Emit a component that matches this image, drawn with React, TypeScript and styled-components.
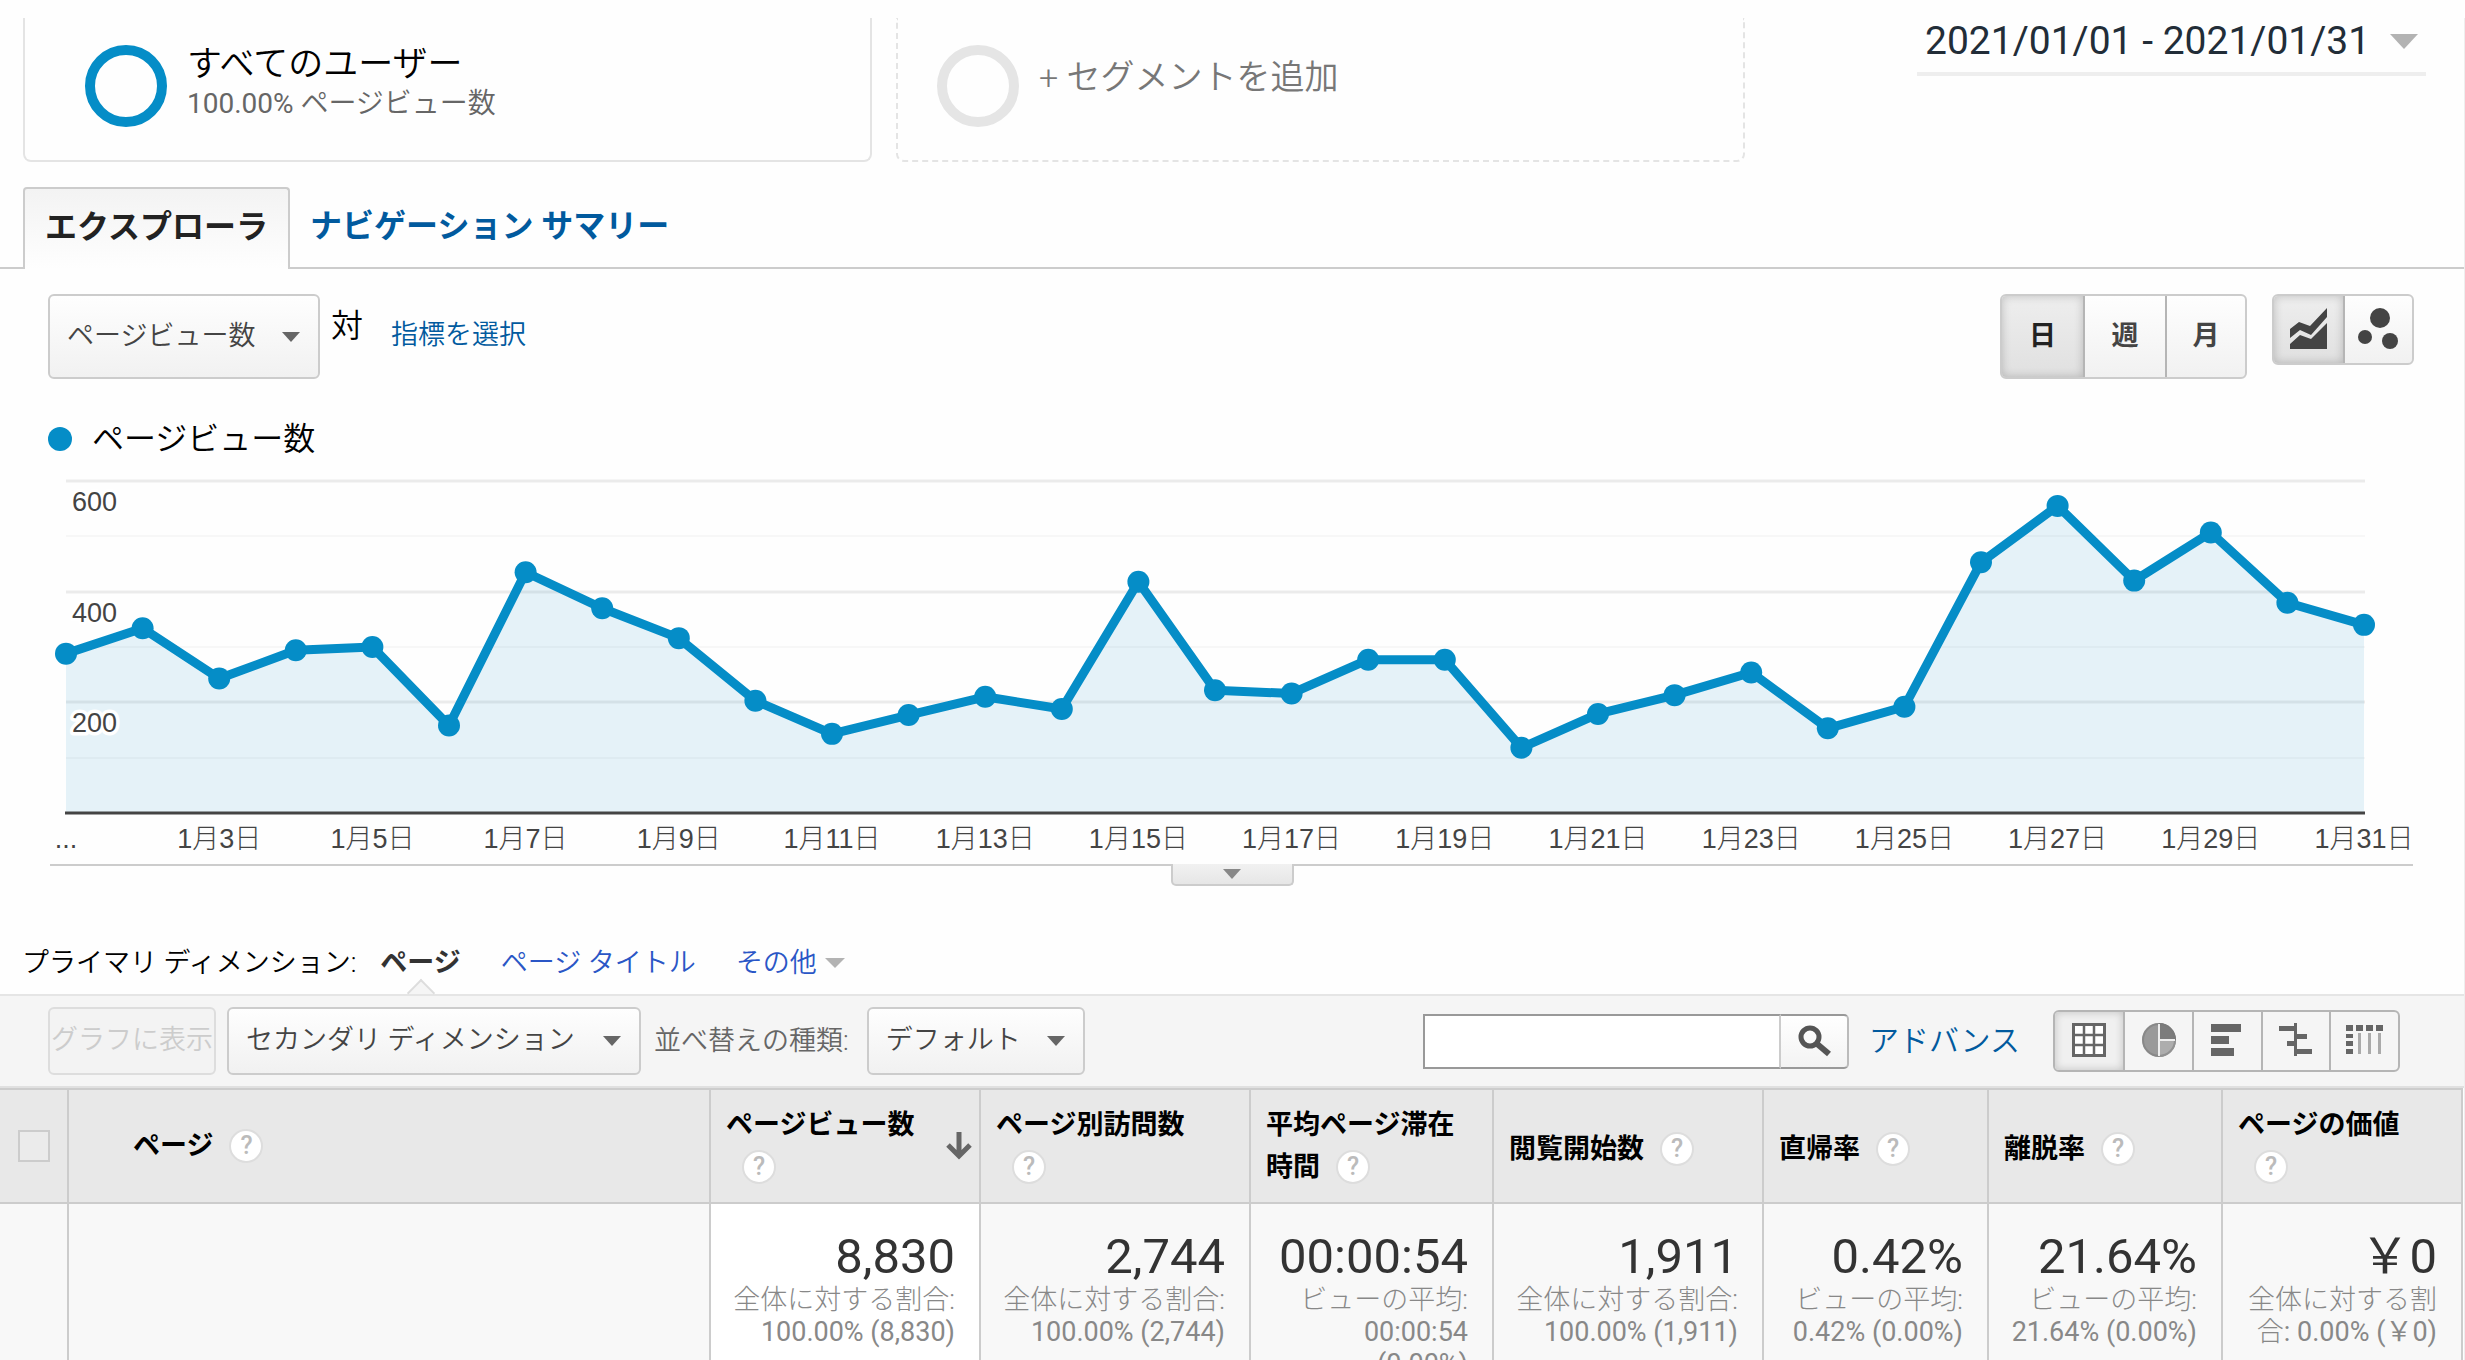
import React, { useLayoutEffect, useRef, useState } from "react";
import styled, { createGlobalStyle, css } from "styled-components";

const jp = `"Noto Sans CJK JP", sans-serif`;

const GlobalStyle = createGlobalStyle`
  *, *::before, *::after { box-sizing: border-box; }
  body {
    margin: 0;
    background: #fefefe;
    color: #000;
    font: 350 27px/40px Roboto, ${jp};
  }
  button, input, select { font: inherit; color: inherit; margin: 0; }
  a { color: #015a9e; text-decoration: none; }
`;

const Page = styled.main`
  height: 100vh;
  overflow: hidden;
  padding-top: 18px;
`;

const Report = styled.div`
  border-right: 1px solid #eee;
  min-height: 100%;
`;

/* ---------- segments ---------- */

const SegmentBar = styled.header`
  display: flex;
  align-items: flex-start;
  gap: 24px;
  padding: 0 38px 0 23px;
  height: 169px;
`;

const Segment = styled.button<{ $empty?: boolean }>`
  display: flex;
  flex: 0 1 849px;
  height: 144px;
  align-items: flex-start;
  gap: 20px;
  padding: ${(p) => (p.$empty ? "27px 0 0 39px" : "27px 0 0 60px")};
  background: none;
  border: 2px ${(p) => (p.$empty ? "dashed" : "solid")} #e4e4e4;
  border-top: 0;
  border-radius: 0 0 8px 8px;
  text-align: left;
`;

const Ring = styled.span<{ $color: string }>`
  flex: none;
  width: 82px;
  height: 82px;
  border: 10px solid ${(p) => p.$color};
  border-radius: 50%;
`;

const SegmentText = styled.span<{ $muted?: boolean }>`
  display: flex;
  flex-direction: column;
  font-size: 35px;
  ${(p) => p.$muted && css`color: #777; padding-top: 12px; font-size: 34px;`}
  small { font-size: 28px; line-height: 38px; color: #666; }
`;

const Digits = styled.span`
  font-weight: 400;
`;

const DateRange = styled.button`
  display: flex;
  align-items: center;
  justify-content: space-between;
  width: 509px;
  height: 58px;
  margin-left: auto;
  padding: 0 8px 8px;
  background: none;
  border: 0;
  border-bottom: 4px solid #eee;
  color: #222d38;
  font-size: 39px;
  font-weight: 400;
  white-space: nowrap;
`;

const Caret = styled.span<{ $w: number; $h: number; $color: string }>`
  flex: none;
  border: solid transparent;
  border-width: ${(p) => p.$h}px ${(p) => p.$w}px 0;
  border-top-color: ${(p) => p.$color};
`;

/* ---------- tabs ---------- */

const Tabs = styled.nav`
  display: flex;
  height: 82px;
  padding-left: 23px;
  border-bottom: 2px solid #ccc;
  font-size: 32px;
  font-weight: 700;
`;

const Tab = styled.a<{ $active?: boolean }>`
  display: flex;
  align-items: center;
  height: 82px;
  padding: 0 20px 4px;
  ${(p) =>
    p.$active &&
    css`
      color: #222;
      background: linear-gradient(#f3f3f3, #fefefe);
      border: 2px solid #ccc;
      border-bottom: 0;
      border-radius: 4px 4px 0 0;
    `}
`;

/* ---------- controls ---------- */

const Controls = styled.div`
  display: flex;
  align-items: flex-start;
  padding: 25px 50px 0 48px;
`;

const raised = css`
  background: linear-gradient(#fefefe, #f1f1f1);
  border: 2px solid #ccc;
  border-radius: 6px;
  color: #444;
`;

const DropBox = styled.span`
  position: relative;
  display: flex;
  flex: none;
`;

const DropSelect = styled.select<{ $h: number }>`
  ${raised}
  appearance: none;
  height: ${(p) => p.$h}px;
  padding: 0 62px 2px 17px;
`;

const DropCaret = styled(Caret)`
  position: absolute;
  right: 20px;
  top: 50%;
  margin-top: -5px;
  pointer-events: none;
`;

const Versus = styled.span`
  padding: 12px 28px 0 11px;
  font-size: 32px;
`;

const MetricLink = styled.a`
  padding-top: 21px;
`;

const ButtonGroup = styled.div<{ $h: number }>`
  ${raised}
  display: flex;
  height: ${(p) => p.$h}px;
  overflow: hidden;
`;

const GroupButton = styled.button<{ $w: number; $on?: boolean; $line?: string }>`
  display: flex;
  align-items: center;
  justify-content: center;
  width: ${(p) => p.$w}px;
  padding: 0 0 2px;
  border: 0;
  background: none;
  font-weight: 700;
  & + & { border-left: 2px solid ${(p) => p.$line ?? "#ccc"}; }
  ${(p) =>
    p.$on &&
    css`
      color: #222;
      background: linear-gradient(#eee, #e0e0e0);
      box-shadow: inset 0 0 10px rgba(0, 0, 0, 0.2);
    `}
`;

const RightSide = styled.div`
  display: flex;
  align-items: flex-start;
  gap: 25px;
  margin-left: auto;
`;

/* ---------- chart ---------- */

const Legend = styled.div`
  display: flex;
  align-items: center;
  gap: 20px;
  height: 40px;
  margin-top: 40px;
  padding-left: 48px;
  font-size: 32px;
  &::before {
    content: "";
    width: 24px;
    height: 24px;
    border-radius: 50%;
    background: #058dc7;
  }
`;

const ChartBox = styled.div`
  margin: 21px 51px 0 50px;
  border-bottom: 2px solid #ccc;
  svg { display: block; width: 100%; height: 384px; overflow: visible; }
  text { fill: #444; font: 300 27px "Liberation Sans", ${jp}; }
`;

const Handle = styled.button`
  display: flex;
  align-items: center;
  justify-content: center;
  width: 123px;
  height: 22px;
  margin: -2px auto 0;
  padding: 0;
  background: linear-gradient(#f1f1f1, #e6e6e6);
  border: 2px solid #ccc;
  border-top: 0;
  border-radius: 0 0 5px 5px;
`;

/* ---------- dimension picker ---------- */

const Dimensions = styled.div`
  display: flex;
  align-items: center;
  height: 70px;
  margin-top: 38px;
  padding: 8px 0 0 22px;
  a { color: #2a56c6; }
`;

const CurrentDimension = styled.strong`
  position: relative;
  margin: 0 40px 0 24px;
  color: #333;
  font-weight: 700;
  &::after {
    content: "";
    position: absolute;
    left: 50%;
    top: 40px;
    width: 20px;
    height: 20px;
    margin-left: -10px;
    background: linear-gradient(135deg, #f5f5f5 50%, transparent 50%);
    border: solid #ddd;
    border-width: 2px 0 0 2px;
    transform: rotate(45deg);
  }
`;

const MoreLink = styled.a`
  display: flex;
  align-items: center;
  gap: 8px;
  margin-left: 40px;
`;

const Toolbar = styled.div`
  display: flex;
  align-items: center;
  height: 94px;
  padding: 0 64px 0 48px;
  background: #f5f5f5;
  border-top: 2px solid #e5e5e5;
  border-bottom: 2px solid #e0e0e0;
`;

const PlotButton = styled.button`
  width: 168px;
  height: 68px;
  margin-right: 11px;
  padding: 0 0 2px;
  overflow: hidden;
  background: #f3f3f3;
  border: 2px solid #ddd;
  border-radius: 6px;
  color: #ccc;
  white-space: nowrap;
`;

const SortLabel = styled.label`
  margin: 0 18px 0 13px;
  color: #666;
  white-space: nowrap;
`;

const Search = styled.form`
  display: flex;
  height: 55px;
  margin-left: auto;
  margin-right: 20px;
  input {
    width: 358px;
    padding: 0 12px;
    background: #fff;
    border: 2px solid #999;
    border-right-color: #ccc;
    border-radius: 0;
  }
  button {
    display: grid;
    place-items: center;
    width: 68px;
    padding: 0;
    background: linear-gradient(#fff, #f3f3f3);
    border: solid #bbb;
    border-width: 2px 2px 2px 0;
    border-color: #999 #bbb #999 #bbb;
    border-radius: 0 5px 5px 0;
  }
`;

const Advanced = styled.a`
  margin-right: 33px;
  font-size: 30px;
`;

const Views = styled(ButtonGroup)`
  background: #f5f5f5;
  border-color: #b5b5b5;
`;

const ViewButton = styled(GroupButton)`
  ${(p) => p.$on && css`background: #f0f0f0; box-shadow: inset 0 0 8px rgba(0, 0, 0, 0.2);`}
`;

/* ---------- table ---------- */

const Table = styled.table`
  width: calc(100% - 1px);
  table-layout: fixed;
  border-collapse: separate;
  border-spacing: 0;
  border-top: 2px solid #ccc;
`;

const HeadCell = styled.th<{ $indent?: number; $single?: boolean }>`
  height: 114px;
  padding: ${(p) => (p.$single ? 6 : 0)}px 0 0 ${(p) => p.$indent ?? 15}px;
  background: #e8e8e8;
  border-right: 2px solid #ccc;
  border-bottom: 2px solid #ccc;
  font-weight: 700;
  line-height: 42px;
  text-align: left;
  vertical-align: middle;
`;

const HeadFlex = styled.div`
  display: flex;
  align-items: center;
  justify-content: space-between;
  padding-right: 7px;
`;

const Check = styled.input`
  display: block;
  appearance: none;
  width: 32px;
  height: 32px;
  border: 2px solid #ccc;
  background: #ebebeb;
`;

const Help = styled.button`
  display: inline-grid;
  place-items: center;
  width: 34px;
  height: 34px;
  margin: 0 0 4px 16px;
  padding: 0;
  background: #fff;
  border: 2px solid #ddd;
  border-radius: 50%;
  color: #bbb;
  font: 500 25px/30px Roboto, sans-serif;
  vertical-align: middle;
`;

const Cell = styled.td<{ $sorted?: boolean }>`
  height: 240px;
  padding: 26px 24px 0 0;
  background: ${(p) => (p.$sorted ? "#fff" : "#f8f8f8")};
  border-right: 2px solid #ccc;
  color: #888;
  line-height: 32px;
  text-align: right;
  vertical-align: top;
`;

const Total = styled.div`
  color: #333;
  font-size: 49px;
  font-weight: 400;
  line-height: 54px;
`;

const Line = styled.div<{ $caption?: boolean }>`
  font-weight: ${(p) => (p.$caption ? 300 : 400)};
  white-space: nowrap;
`;

const Light = styled.span`
  font-weight: 300;
`;

/* ---------- data ---------- */

const daily = [
  288, 334, 243, 294, 300, 158, 435, 370, 316, 203, 143, 177, 210, 188, 418, 222, 216, 277, 277, 118,
  179, 213, 254, 153, 192, 453, 555, 420, 507, 380, 340,
];

const columns = [
  { w: 270, head: ["ページビュー数", ""], total: "8,830", sub: ["全体に対する割合:", "100.00% (8,830)"] },
  { w: 270, head: ["ページ別訪問数", ""], total: "2,744", sub: ["全体に対する割合:", "100.00% (2,744)"] },
  { w: 243, head: ["平均ページ滞在", "時間"], total: "00:00:54", sub: ["ビューの平均:", "00:00:54", "(0.00%)"] },
  { w: 270, head: ["閲覧開始数"], total: "1,911", sub: ["全体に対する割合:", "100.00% (1,911)"] },
  { w: 225, head: ["直帰率"], total: "0.42%", sub: ["ビューの平均:", "0.42% (0.00%)"] },
  { w: 234, head: ["離脱率"], total: "21.64%", sub: ["ビューの平均:", "21.64% (0.00%)"] },
  { w: 240, head: ["ページの価値", ""], total: "￥0", sub: ["全体に対する割", <><Light>合</Light>: 0.00% (￥0)</>] },
];

/* ---------- drawings ---------- */

const AreaIcon = () => (
  <svg width="37" height="41" viewBox="0 0 37 41" fill="#444">
    <path d="M0 21 9 14 20 18 37 0V9L21 27 10 22 0 30Z" />
    <path d="M0 41V36L10 27 21 31 37 15V41Z" />
  </svg>
);

const MotionIcon = () => (
  <svg width="41" height="41" viewBox="0 0 41 41" fill="#444">
    <circle cx="22" cy="10" r="10" />
    <circle cx="7" cy="29" r="7" />
    <circle cx="32" cy="33" r="8" />
  </svg>
);

const SearchIcon = () => (
  <svg width="34" height="32" viewBox="0 0 34 32" fill="none" stroke="#555">
    <circle cx="13" cy="12" r="9" strokeWidth="5" />
    <path d="M19 18 32 29" strokeWidth="6" />
  </svg>
);

const SortIcon = () => (
  <svg width="26" height="28" viewBox="0 0 26 28" fill="none" stroke="#666" strokeWidth="5">
    <path d="M13 0V24M2 13 13 24 24 13" />
  </svg>
);

const GridIcon = () => (
  <svg width="34" height="34" viewBox="0 0 34 34" fill="#fff" stroke="#666">
    <path d="M1.5 1.5H32.5V32.5H1.5Z" strokeWidth="3" />
    <path d="M12 1V33M22 1V33M1 12H33M1 22H33" strokeWidth="2.5" />
  </svg>
);

const PieIcon = () => (
  <svg width="36" height="36" viewBox="0 0 36 36">
    <circle cx="18" cy="18" r="17" fill="#999" />
    <path d="M18 18V1A17 17 0 0 1 35 18Z" fill="#7c7c7c" />
    <path d="M18 18H35A17 17 0 0 1 18 35Z" fill="#adadad" />
    <circle cx="18" cy="18" r="16" fill="none" stroke="#777" strokeOpacity="0.5" strokeWidth="2" />
    <path d="M18 2V34M18 18H34" stroke="#eee" strokeWidth="2" />
  </svg>
);

const BarsIcon = () => (
  <svg width="34" height="34" viewBox="0 0 34 34" fill="#666">
    <path d="M0 1H30V9H0ZM0 13H18V21H0ZM0 25H23V33H0Z" />
  </svg>
);

const CompareIcon = () => (
  <svg width="34" height="34" viewBox="0 0 34 34" fill="#666">
    <path d="M0 3H15V8H0ZM17 11H28V16H17ZM8 18H15V23H8ZM17 26H33V31H17ZM15 0H18V33H15Z" />
  </svg>
);

const PivotIcon = () => (
  <svg width="38" height="30" viewBox="0 0 38 30" fill="#666">
    <path d="M0 0H7V6H0ZM10 0H17V6H10ZM20 0H27V6H20ZM30 0H37V6H30ZM0 9H7V13H0ZM0 16H7V21H0ZM0 24H7V29H0Z" />
    <path d="M12 8H15V29H12ZM22 8H25V29H22ZM32 8H35V29H32Z" fill="#aaa" />
  </svg>
);

function PageviewsChart() {
  const box = useRef<HTMLDivElement>(null);
  const [width, setWidth] = useState(2364);

  useLayoutEffect(() => {
    const measure = () => box.current && setWidth(box.current.clientWidth);
    measure();
    window.addEventListener("resize", measure);
    return () => window.removeEventListener("resize", measure);
  }, []);

  const left = 16;
  const right = width - 49;
  const base = 333;
  const x = (i: number) => left + ((right - left) * i) / (daily.length - 1);
  const y = (v: number) => base - (v * 332) / 600;
  const line = daily.map((v, i) => `${x(i)},${y(v)}`).join(" ");

  return (
    <ChartBox ref={box}>
      <svg role="img" aria-label="ページビュー数">
        {[600, 500, 400, 300, 200, 100].map((v) => (
          <path
            key={v}
            d={`M${left} ${Math.round(y(v))}H${right + 1}`}
            stroke={v % 200 ? "#f7f7f7" : "#ebebeb"}
            strokeWidth={v % 200 ? 2 : 3}
          />
        ))}
        <polygon points={`${left},${base} ${line} ${right},${base}`} fill="#058dc7" fillOpacity="0.1" />
        <path d={`M${left - 1} ${base}H${right + 1}`} stroke="#444" strokeWidth="3" />
        <polyline points={line} fill="none" stroke="#058dc7" strokeWidth="9" strokeLinejoin="round" />
        {daily.map((v, i) => (
          <circle key={i} cx={x(i)} cy={y(v)} r="11" fill="#058dc7" />
        ))}
        {[600, 400, 200].map((v) => (
          <text key={v} x={left + 6} y={y(v) + 30} stroke="#fff" strokeWidth="7" strokeLinejoin="round" paintOrder="stroke">
            {v}
          </text>
        ))}
        <text x={left} y="368" textAnchor="middle">...</text>
        {daily.map((_, i) =>
          i > 0 && i % 2 === 0 ? (
            <text key={i} x={x(i)} y="368" textAnchor="middle">{`1月${i + 1}日`}</text>
          ) : null
        )}
      </svg>
    </ChartBox>
  );
}

const HelpButton = () => <Help type="button" aria-label="ヘルプ">?</Help>;

function Dropdown({ value, height, id, label }: { value: string; height: number; id?: string; label?: string }) {
  return (
    <DropBox>
      <DropSelect $h={height} id={id} aria-label={label}>
        <option>{value}</option>
      </DropSelect>
      <DropCaret $w={9} $h={10} $color="#666" />
    </DropBox>
  );
}

export default function App() {
  return (
    <Page>
      <GlobalStyle />
      <Report>
        <SegmentBar>
          <Segment type="button">
            <Ring $color="#058dc7" />
            <SegmentText>
              すべてのユーザー
              <small><Digits>100.00%</Digits> ページビュー数</small>
            </SegmentText>
          </Segment>
          <Segment type="button" $empty>
            <Ring $color="#e5e5e5" />
            <SegmentText $muted>+ セグメントを追加</SegmentText>
          </Segment>
          <DateRange type="button">
            2021/01/01 - 2021/01/31
            <Caret $w={14} $h={15} $color="#b3b3b3" />
          </DateRange>
        </SegmentBar>

        <Tabs>
          <Tab href="#explorer" $active>エクスプローラ</Tab>
          <Tab href="#navigation">ナビゲーション サマリー</Tab>
        </Tabs>

        <Controls>
          <Dropdown value="ページビュー数" height={85} label="指標" />
          <Versus>対</Versus>
          <MetricLink href="#metric">指標を選択</MetricLink>
          <RightSide>
            <ButtonGroup $h={85}>
              <GroupButton type="button" $w={81} $on>日</GroupButton>
              <GroupButton type="button" $w={82}>週</GroupButton>
              <GroupButton type="button" $w={80}>月</GroupButton>
            </ButtonGroup>
            <ButtonGroup $h={71}>
              <GroupButton type="button" $w={69} $on aria-label="折れ線グラフ"><AreaIcon /></GroupButton>
              <GroupButton type="button" $w={69} aria-label="モーション グラフ"><MotionIcon /></GroupButton>
            </ButtonGroup>
          </RightSide>
        </Controls>

        <Legend>ページビュー数</Legend>
        <PageviewsChart />
        <Handle type="button" aria-label="グラフの切り替え">
          <Caret $w={9} $h={10} $color="#888" />
        </Handle>

        <Dimensions>
          プライマリ ディメンション:
          <CurrentDimension>ページ</CurrentDimension>
          <a href="#title">ページ タイトル</a>
          <MoreLink href="#more">
            その他
            <Caret $w={10} $h={10} $color="#b3b3b3" />
          </MoreLink>
        </Dimensions>

        <Toolbar>
          <PlotButton type="button" disabled>グラフに表示</PlotButton>
          <Dropdown value="セカンダリ ディメンション" height={68} label="セカンダリ ディメンション" />
          <SortLabel htmlFor="sort-type">並べ替えの種類:</SortLabel>
          <Dropdown value="デフォルト" height={68} id="sort-type" />
          <Search>
            <input type="text" aria-label="検索" />
            <button type="button" aria-label="検索"><SearchIcon /></button>
          </Search>
          <Advanced href="#advanced">アドバンス</Advanced>
          <Views $h={62}>
            <ViewButton type="button" $w={68} $line="#b5b5b5" $on aria-label="表"><GridIcon /></ViewButton>
            <ViewButton type="button" $w={69} $line="#b5b5b5" aria-label="円グラフ"><PieIcon /></ViewButton>
            <ViewButton type="button" $w={69} $line="#b5b5b5" aria-label="棒グラフ"><BarsIcon /></ViewButton>
            <ViewButton type="button" $w={68} $line="#b5b5b5" aria-label="比較"><CompareIcon /></ViewButton>
            <ViewButton type="button" $w={69} $line="#b5b5b5" aria-label="ピボット"><PivotIcon /></ViewButton>
          </Views>
        </Toolbar>

        <Table>
          <colgroup>
            <col width="69" />
            <col />
            {columns.map((c) => (
              <col key={c.total} width={c.w} />
            ))}
          </colgroup>
          <thead>
            <tr>
              <HeadCell $indent={18}>
                <Check type="checkbox" aria-label="すべて選択" />
              </HeadCell>
              <HeadCell $indent={64}>ページ<HelpButton /></HeadCell>
              {columns.map((c, i) => (
                <HeadCell key={c.total} $single={c.head.length === 1}>
                  <HeadFlex>
                    <span>
                      {c.head[0]}
                      {c.head.length > 1 && <br />}
                      {c.head[1]}
                      <HelpButton />
                    </span>
                    {i === 0 && <SortIcon />}
                  </HeadFlex>
                </HeadCell>
              ))}
            </tr>
          </thead>
          <tbody>
            <tr>
              <Cell />
              <Cell />
              {columns.map((c, i) => (
                <Cell key={c.total} $sorted={i === 0}>
                  <Total>{c.total}</Total>
                  {c.sub.map((s, n) => (
                    <Line key={n} $caption={n === 0}>{s}</Line>
                  ))}
                </Cell>
              ))}
            </tr>
          </tbody>
        </Table>
      </Report>
    </Page>
  );
}
